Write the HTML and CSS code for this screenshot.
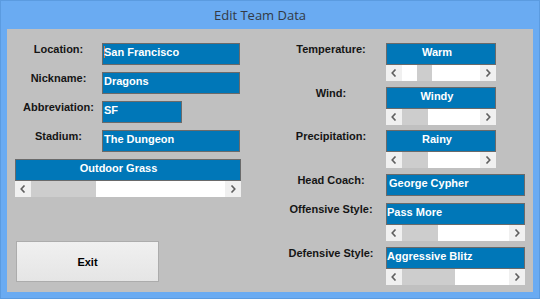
FILE: index.html
```html
<!DOCTYPE html>
<html lang="en">
<head>
    <meta charset="UTF-8">
    <meta name="viewport" content="width=device-width, initial-scale=1.0">
    <title>Edit Team Data</title>

    <link rel="stylesheet" href="styles.css">
</head>
<body>

    <div id="teamWindow">
        <div class="title-bar">Edit Team Data</div>

        <div class="client">
            <!-- Left side: team info -->
            <div class="left-col">
                <div class="field-row">
                    <span class="field-label">Location:</span>
                    <div class="text-box wide"><span class="caret"></span>San Francisco</div>
                </div>
                <div class="field-row">
                    <span class="field-label">Nickname:</span>
                    <div class="text-box wide">Dragons</div>
                </div>
                <div class="field-row">
                    <span class="field-label">Abbreviation:</span>
                    <div class="text-box short">SF</div>
                </div>
                <div class="field-row">
                    <span class="field-label">Stadium:</span>
                    <div class="text-box wide">The Dungeon</div>
                </div>

                <div class="picker picker-surface">
                    <div class="picker-value">Outdoor Grass</div>
                    <div class="scrollbar">
                        <span class="arrow"><svg width="6" height="8" viewBox="0 0 6 8"><polyline points="4.5,0.5 1.2,4 4.5,7.5" fill="none" stroke="#5f5f5f" stroke-width="1.6"/></svg></span>
                        <span class="track"><span class="thumb" style="width: 65px; margin-left: 0px;"></span></span>
                        <span class="arrow"><svg width="6" height="8" viewBox="0 0 6 8"><polyline points="1.5,0.5 4.8,4 1.5,7.5" fill="none" stroke="#5f5f5f" stroke-width="1.6"/></svg></span>
                    </div>
                </div>

                <button class="exit-btn" type="button">Exit</button>
            </div>

            <!-- Right side: game conditions and coach -->
            <div class="right-col">
                <div class="field-row row-temp">
                    <span class="field-label">Temperature:</span>
                    <div class="picker picker-small">
                        <div class="picker-value">Warm</div>
                        <div class="scrollbar">
                            <span class="arrow"><svg width="6" height="8" viewBox="0 0 6 8"><polyline points="4.5,0.5 1.2,4 4.5,7.5" fill="none" stroke="#5f5f5f" stroke-width="1.6"/></svg></span>
                            <span class="track"><span class="thumb" style="width: 15px; margin-left: 15px;"></span></span>
                            <span class="arrow"><svg width="6" height="8" viewBox="0 0 6 8"><polyline points="1.5,0.5 4.8,4 1.5,7.5" fill="none" stroke="#5f5f5f" stroke-width="1.6"/></svg></span>
                        </div>
                    </div>
                </div>
                <div class="field-row row-wind">
                    <span class="field-label">Wind:</span>
                    <div class="picker picker-small">
                        <div class="picker-value">Windy</div>
                        <div class="scrollbar">
                            <span class="arrow"><svg width="6" height="8" viewBox="0 0 6 8"><polyline points="4.5,0.5 1.2,4 4.5,7.5" fill="none" stroke="#5f5f5f" stroke-width="1.6"/></svg></span>
                            <span class="track"><span class="thumb" style="width: 26px; margin-left: 0px;"></span></span>
                            <span class="arrow"><svg width="6" height="8" viewBox="0 0 6 8"><polyline points="1.5,0.5 4.8,4 1.5,7.5" fill="none" stroke="#5f5f5f" stroke-width="1.6"/></svg></span>
                        </div>
                    </div>
                </div>
                <div class="field-row row-precip">
                    <span class="field-label">Precipitation:</span>
                    <div class="picker picker-small">
                        <div class="picker-value">Rainy</div>
                        <div class="scrollbar">
                            <span class="arrow"><svg width="6" height="8" viewBox="0 0 6 8"><polyline points="4.5,0.5 1.2,4 4.5,7.5" fill="none" stroke="#5f5f5f" stroke-width="1.6"/></svg></span>
                            <span class="track"><span class="thumb" style="width: 26px; margin-left: 0px;"></span></span>
                            <span class="arrow"><svg width="6" height="8" viewBox="0 0 6 8"><polyline points="1.5,0.5 4.8,4 1.5,7.5" fill="none" stroke="#5f5f5f" stroke-width="1.6"/></svg></span>
                        </div>
                    </div>
                </div>
                <div class="field-row row-coach">
                    <span class="field-label">Head Coach:</span>
                    <div class="text-box coach">George Cypher</div>
                </div>
                <div class="field-row row-offense">
                    <span class="field-label">Offensive Style:</span>
                    <div class="picker picker-large">
                        <div class="picker-value">Pass More</div>
                        <div class="scrollbar">
                            <span class="arrow"><svg width="6" height="8" viewBox="0 0 6 8"><polyline points="4.5,0.5 1.2,4 4.5,7.5" fill="none" stroke="#5f5f5f" stroke-width="1.6"/></svg></span>
                            <span class="track"><span class="thumb" style="width: 36px; margin-left: 0px;"></span></span>
                            <span class="arrow"><svg width="6" height="8" viewBox="0 0 6 8"><polyline points="1.5,0.5 4.8,4 1.5,7.5" fill="none" stroke="#5f5f5f" stroke-width="1.6"/></svg></span>
                        </div>
                    </div>
                </div>
                <div class="field-row row-defense">
                    <span class="field-label">Defensive Style:</span>
                    <div class="picker picker-large">
                        <div class="picker-value">Aggressive Blitz</div>
                        <div class="scrollbar">
                            <span class="arrow"><svg width="6" height="8" viewBox="0 0 6 8"><polyline points="4.5,0.5 1.2,4 4.5,7.5" fill="none" stroke="#5f5f5f" stroke-width="1.6"/></svg></span>
                            <span class="track"><span class="thumb" style="width: 53px; margin-left: 0px;"></span></span>
                            <span class="arrow"><svg width="6" height="8" viewBox="0 0 6 8"><polyline points="1.5,0.5 4.8,4 1.5,7.5" fill="none" stroke="#5f5f5f" stroke-width="1.6"/></svg></span>
                        </div>
                    </div>
                </div>
            </div>
        </div>
    </div>

</body>
</html>
```

FILE: styles.css
```css
body {
    margin: 0;
    padding: 0;
    font-family: 'Liberation Sans', Arial, sans-serif;
    font-size: 11px;
    font-weight: bold;
    line-height: 13px;
    color: #151515;
}

#teamWindow {
    width: 540px;
    height: 299px;
    box-sizing: border-box;
    background-color: #6aabf2;
    border: 1px solid #5b9be0;
    padding: 0 6px 6px;
    display: flex;
    flex-direction: column;
}

.title-bar {
    height: 28px;
    line-height: 28px;
    text-align: center;
    padding-right: 20px;
    font-family: 'Open Sans', 'Noto Sans', sans-serif;
    font-size: 13px;
    font-weight: normal;
    color: #333a45;
}

.client {
    flex: 1;
    background-color: #c0c0c0;
    display: flex;
    padding: 14px 0 0 8px;
}

.left-col {
    width: 226px;
    display: flex;
    flex-direction: column;
    gap: 7px;
}

.right-col {
    margin-left: 35px;
    display: flex;
    flex-direction: column;
}

.field-row {
    display: flex;
    align-items: flex-start;
}

.left-col .field-label {
    width: 87px;
    text-align: center;
}

.right-col .field-label {
    width: 110px;
    text-align: center;
}

.row-wind { margin-top: 6px; }
.row-precip { margin-top: 5px; }
.row-coach { margin-top: 6px; }
.row-offense { margin-top: 7px; }
.row-defense { margin-top: 6px; }

.text-box {
    height: 22px;
    box-sizing: border-box;
    background-color: #0077b8;
    border: 1px solid #6a6a6a;
    padding: 2px 1px 0;
    color: #fff;
    white-space: nowrap;
}

.text-box.wide { width: 138px; }
.text-box.short { width: 80px; }
.text-box.coach { width: 139px; padding-left: 2px; }

.caret {
    display: inline-block;
    width: 1px;
    height: 12px;
    margin-right: -1px;
    vertical-align: -2px;
    background-color: #e07a3a;
}

.picker {
    display: flex;
    flex-direction: column;
}

.picker-surface { width: 226px; }
.picker-small { width: 110px; }
.picker-large { width: 139px; }

.picker-value {
    height: 22px;
    box-sizing: border-box;
    background-color: #0077b8;
    border: 1px solid #6a6a6a;
    padding: 2px 8px 0 0;
    color: #fff;
    text-align: center;
    white-space: nowrap;
}

.picker-surface .picker-value { padding-right: 19px; }
.picker-large .picker-value { text-align: left; padding: 2px 0 0 0; }

.scrollbar {
    height: 16px;
    display: flex;
    background-color: #fff;
}

.arrow {
    width: 16px;
    flex: none;
    background-color: #f0f0f0;
    display: flex;
    align-items: center;
    justify-content: center;
}

.track {
    flex: 1;
    display: flex;
}

.thumb {
    height: 100%;
    background-color: #cdcdcd;
}

.exit-btn {
    margin: 37px 0 0 1px;
    width: 143px;
    height: 41px;
    border: 1px solid #acacac;
    background: linear-gradient(#f0f0f0, #e5e5e5);
    font-family: 'Liberation Sans', Arial, sans-serif;
    font-size: 11px;
    font-weight: bold;
    color: #000;
    padding: 0;
}
```
